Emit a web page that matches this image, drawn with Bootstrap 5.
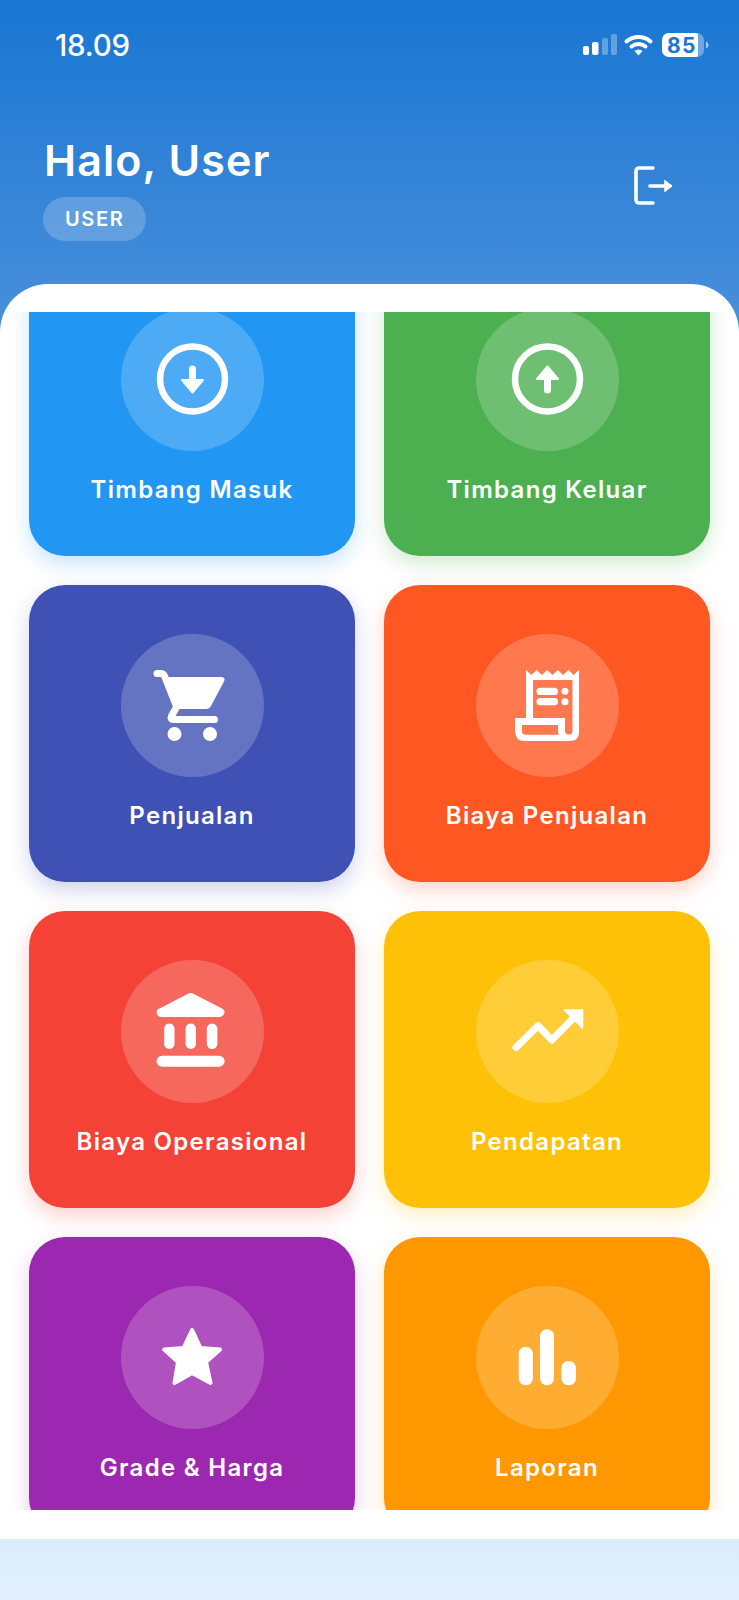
<!DOCTYPE html>
<html lang="id">
<head>
<meta charset="utf-8">
<title>Halo, User</title>
<link href="https://cdn.jsdelivr.net/npm/bootstrap@5.3.0/dist/css/bootstrap.min.css" rel="stylesheet">
<style>
html,body{margin:0;height:1600px;overflow:hidden}
body{font-family:Inter,"Liberation Sans",sans-serif;background:linear-gradient(180deg,#1976d2 0,#4a90dc 335px,#4a90dc 1530px,#daebfa 1539px,#e3f1fd 1600px);color:#fff}
.app-frame{height:1600px}
.status-row{height:90px;padding:28px 29px 0 55px}
.clock{font-size:29.500px;font-weight:500;line-height:34px;letter-spacing:-.2px}
.status-svg{display:block;margin-top:4px}
.hello-row{height:194px;padding:46px 65px 0 43px}
.hello{font-size:43px;line-height:48px;font-weight:600;letter-spacing:1.100px;margin:0 0 0 1px}
.role-pill{display:inline-block;height:44px;line-height:44px;margin-top:13px;padding:0 22px;border-radius:22px;background:rgba(255,255,255,.2);font-size:20px;font-weight:600;letter-spacing:1.600px}
.logout-svg{display:block;margin-top:30px}
.panel{height:1255px;background:#fff;border-radius:48px 48px 0 0;padding:28px 0 29px}
.scroller{height:1198px;overflow:hidden;padding:0 29px}
.tile-grid{display:grid;grid-template-columns:326px 326px;gap:29px;margin-top:-53px}
.tile{height:297px;border-radius:36px;padding-top:49px;text-align:center}
.disc{width:143px;height:143px;border-radius:50%;background:rgba(255,255,255,.2);margin:0 auto}
.disc svg{display:block}
.tile-name{font-size:24px;line-height:30px;font-weight:600;letter-spacing:1.300px;margin-top:24px}
.t-blue{background:#2196f3;box-shadow:0 8px 20px rgba(33,150,243,.25)}
.t-green{background:#4caf50;box-shadow:0 8px 20px rgba(76,175,80,.25)}
.t-indigo{background:#3f51b5;box-shadow:0 8px 20px rgba(63,81,181,.25)}
.t-deep{background:#ff5722;box-shadow:0 8px 20px rgba(255,87,34,.25)}
.t-red{background:#f44336;box-shadow:0 8px 20px rgba(244,67,54,.25)}
.t-amber{background:#ffc107;box-shadow:0 8px 20px rgba(255,193,7,.25)}
.t-purple{background:#9c27b0;box-shadow:0 8px 20px rgba(156,39,176,.25)}
.t-orange{background:#ff9800;box-shadow:0 8px 20px rgba(255,152,0,.25)}
.batt-num{font-family:Inter,"Liberation Sans",sans-serif;font-size:21px;font-weight:700;fill:#1f74d0;letter-spacing:1.300px}
</style>
</head>
<body>
<div class="app-frame d-flex flex-column">
  <div class="status-row d-flex justify-content-between align-items-start">
    <span class="clock">18.09</span>
    <svg class="status-svg" width="128" height="26" viewBox="0 0 128 26" aria-hidden="true">
      <rect x="1" y="14" width="6" height="9" rx="2" fill="#fff"/>
      <rect x="10" y="10" width="6.500" height="13" rx="2" fill="#fff"/>
      <rect x="20" y="6" width="6" height="17" rx="2" fill="#fff" fill-opacity=".3"/>
      <rect x="29" y="2" width="6" height="21" rx="2" fill="#fff" fill-opacity=".3"/>
      <path d="M44.500 9.500a18 18 0 0 1 24 0" fill="none" stroke="#fff" stroke-width="4" stroke-linecap="round"/>
      <path d="M49.500 14.500a11 11 0 0 1 14 0" fill="none" stroke="#fff" stroke-width="4" stroke-linecap="round"/>
      <path d="M52.500 19a6 6 0 0 1 8 0l-4 4.500z" fill="#fff"/>
      <rect x="80" y="1" width="42" height="24" rx="7" fill="#fff" fill-opacity=".35"/>
      <path d="M87 1h27a2 2 0 0 1 2 2v20a2 2 0 0 1-2 2H87a7 7 0 0 1-7-7V8a7 7 0 0 1 7-7z" fill="#fff"/>
      <path d="M124 9.500c2 1 2.500 2.200 2.500 3.500s-.5 2.500-2.500 3.500z" fill="#fff" fill-opacity=".6"/>
      <text class="batt-num" x="85" y="20.800">85</text>
    </svg>
  </div>
  <div class="hello-row d-flex justify-content-between align-items-start">
    <div>
      <h1 class="hello">Halo, User</h1>
      <span class="role-pill">USER</span>
    </div>
    <svg class="logout-svg" width="40" height="40" viewBox="0 0 40 40" fill="none" stroke="#fff" stroke-width="3.600" stroke-linecap="round" stroke-linejoin="round" aria-hidden="true">
      <path d="M19 2H5a3 3 0 0 0-3 3v29a3 3 0 0 0 3 3h14"/>
      <path d="M16 20h20"/>
      <path d="M31 14.500l7 5.500-7 5.500z" fill="#fff" stroke-width="1"/>
    </svg>
  </div>
  <div class="panel">
    <div class="scroller">
      <div class="tile-grid">
        <div class="tile t-blue">
          <div class="disc"><svg width="143" height="143" viewBox="0 0 143 143" aria-hidden="true">
            <circle cx="71.500" cy="71" r="32.500" fill="none" stroke="#fff" stroke-width="6.500"/>
            <path d="M71.500 61v14" stroke="#fff" stroke-width="7" stroke-linecap="round"/>
            <path d="M61 72h21l-10.500 12.500z" fill="#fff" stroke="#fff" stroke-width="2" stroke-linejoin="round"/>
          </svg></div>
          <div class="tile-name">Timbang Masuk</div>
        </div>
        <div class="tile t-green">
          <div class="disc"><svg width="143" height="143" viewBox="0 0 143 143" aria-hidden="true">
            <circle cx="71.500" cy="71" r="32.500" fill="none" stroke="#fff" stroke-width="6.500"/>
            <path d="M71.500 68v14" stroke="#fff" stroke-width="7" stroke-linecap="round"/>
            <path d="M61 71h21L71.500 58.500z" fill="#fff" stroke="#fff" stroke-width="2" stroke-linejoin="round"/>
          </svg></div>
          <div class="tile-name">Timbang Keluar</div>
        </div>
        <div class="tile t-indigo">
          <div class="disc"><svg width="143" height="143" viewBox="0 0 143 143" aria-hidden="true">
            <path d="M43 43h57q5 0 3 4.500L90 72q-1.500 3-5 3H54z" fill="#fff"/>
            <path d="M36 39.500h4q2.500 0 3.500 2.500L55 71" fill="none" stroke="#fff" stroke-width="7" stroke-linecap="round"/>
            <path d="M55 74L50.500 82q-1.500 3.500 2 3.500h41" fill="none" stroke="#fff" stroke-width="7" stroke-linecap="round" stroke-linejoin="round"/>
            <circle cx="53.500" cy="100" r="7" fill="#fff"/>
            <circle cx="89" cy="100" r="7" fill="#fff"/>
          </svg></div>
          <div class="tile-name">Penjualan</div>
        </div>
        <div class="tile t-deep">
          <div class="disc"><svg width="143" height="143" viewBox="0 0 143 143" aria-hidden="true">
            <path fill-rule="evenodd" fill="#fff" d="M50 36l5.300 5 5.300-5 5.300 5 5.300-5 5.300 5 5.300-5 5.300 5 5.300-5 5.300 5 5.300-5v62q0 9-9 9H49q-10 0-10-10V84h11zM57 46v38h32v13q0 3.500 3.800 3.500t3.700-3.500V46zM46 91v6q0 3.800 3.500 3.800h33.500q-1-1.800-1-3.800v-6z"/>
            <rect x="60.500" y="53.700" width="21.500" height="7.300" rx="3.600" fill="#fff"/>
            <rect x="60.500" y="64" width="21.500" height="7.300" rx="3.600" fill="#fff"/>
            <circle cx="89" cy="57.300" r="3.500" fill="#fff"/>
            <circle cx="89" cy="67.700" r="3.500" fill="#fff"/>
          </svg></div>
          <div class="tile-name">Biaya Penjualan</div>
        </div>
        <div class="tile t-red">
          <div class="disc"><svg width="143" height="143" viewBox="0 0 143 143" aria-hidden="true">
            <path d="M67 33.700q2.700-1.400 5.400 0L101 48.500q3 1.800 2.500 4.500t-4 4H40q-3.500 0-4.200-4t2.700-4.500z" fill="#fff"/>
            <rect x="43.200" y="63.400" width="10.300" height="25.600" rx="5.100" fill="#fff"/>
            <rect x="64.600" y="63.400" width="10.300" height="25.600" rx="5.100" fill="#fff"/>
            <rect x="85.800" y="63.400" width="10.600" height="25.600" rx="5.200" fill="#fff"/>
            <rect x="35.600" y="95.700" width="68" height="11" rx="5.500" fill="#fff"/>
          </svg></div>
          <div class="tile-name">Biaya Operasional</div>
        </div>
        <div class="tile t-amber">
          <div class="disc"><svg width="143" height="143" viewBox="0 0 143 143" aria-hidden="true">
            <path d="M40 87.400L62 65.700 75.800 80 100 55.500" fill="none" stroke="#fff" stroke-width="7" stroke-linecap="round" stroke-linejoin="round"/>
            <path d="M88.500 50h18v18z" fill="#fff" stroke="#fff" stroke-width="1.500" stroke-linejoin="round"/>
          </svg></div>
          <div class="tile-name">Pendapatan</div>
        </div>
        <div class="tile t-purple">
          <div class="disc"><svg width="143" height="143" viewBox="0 0 143 143" aria-hidden="true">
            <path d="M71.100 44L79.500 62 99 63.500 85 76 89.500 97 71.100 87 53.500 97 57 76 43.200 63.500 62.500 62z" fill="#fff" stroke="#fff" stroke-width="4" stroke-linejoin="round"/>
          </svg></div>
          <div class="tile-name">Grade &amp; Harga</div>
        </div>
        <div class="tile t-orange">
          <div class="disc"><svg width="143" height="143" viewBox="0 0 143 143" aria-hidden="true">
            <rect x="42.700" y="60.700" width="14.200" height="38.600" rx="7" fill="#fff"/>
            <rect x="64" y="43.300" width="14" height="56" rx="7" fill="#fff"/>
            <rect x="85.400" y="75" width="14.600" height="24.300" rx="7" fill="#fff"/>
          </svg></div>
          <div class="tile-name">Laporan</div>
        </div>
      </div>
    </div>
  </div>
</div>
<script src="https://cdn.jsdelivr.net/npm/bootstrap@5.3.0/dist/js/bootstrap.bundle.min.js"></script>
</body>
</html>
